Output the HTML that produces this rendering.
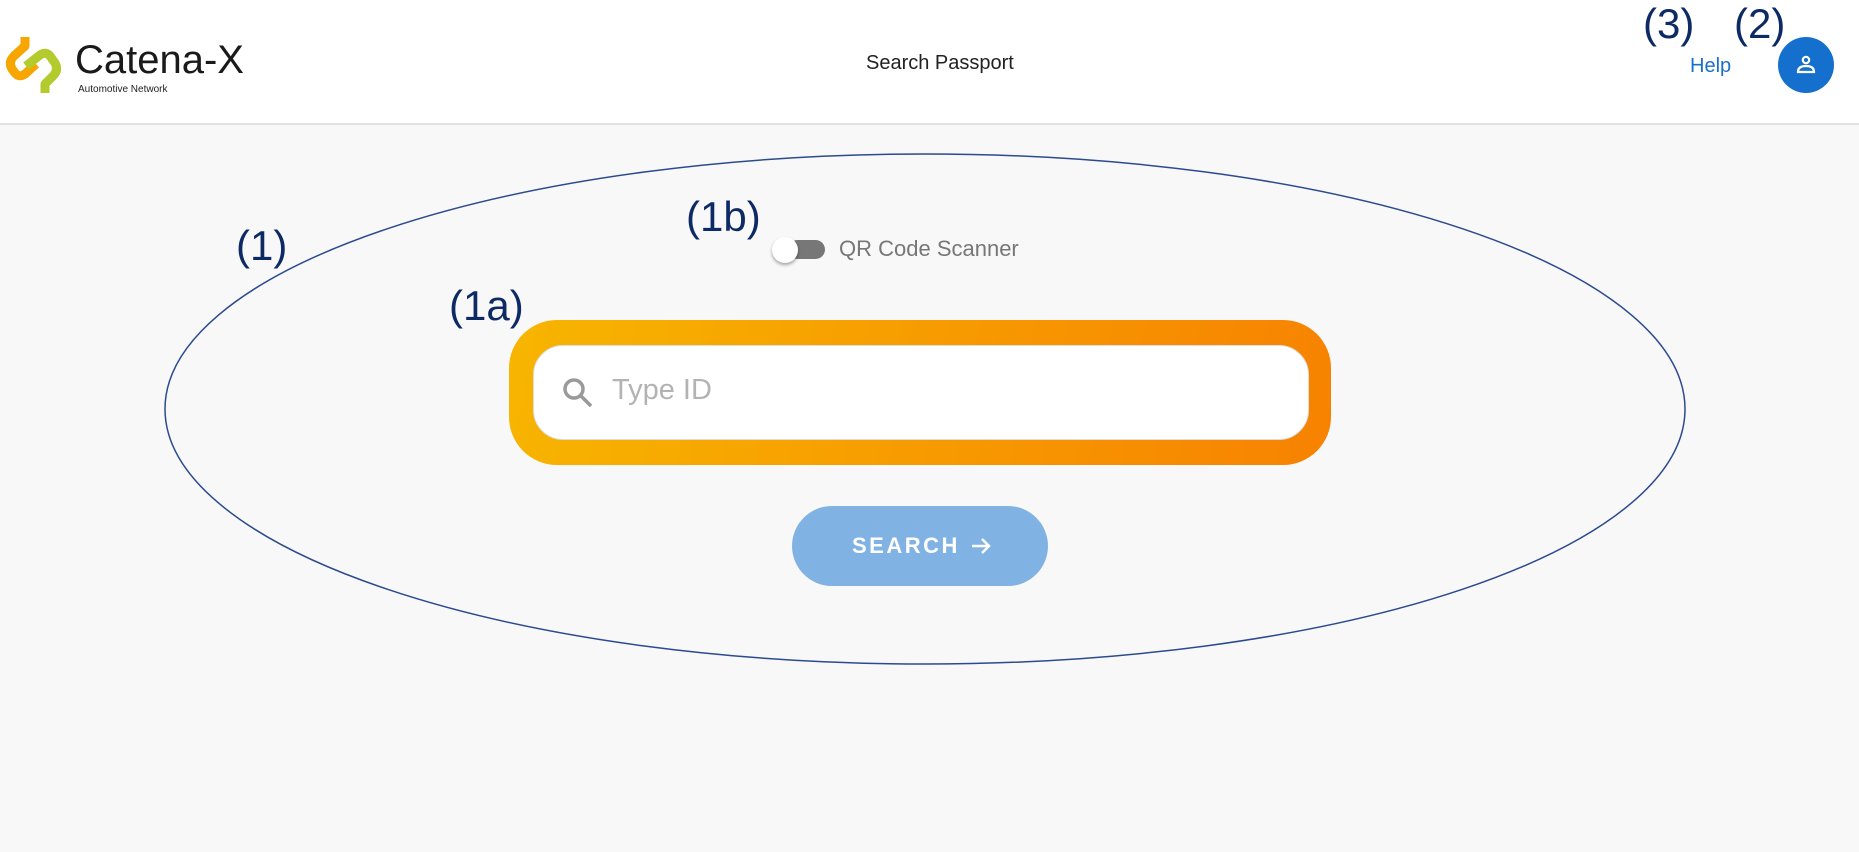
<!DOCTYPE html>
<html><head><meta charset="utf-8"><style>
*{margin:0;padding:0;box-sizing:border-box}
body{width:1859px;height:852px;background:#f8f8f8;font-family:"Liberation Sans",sans-serif;position:relative;overflow:hidden}
.hdr{position:absolute;left:0;top:0;width:1859px;height:125px;background:#fff;border-bottom:2px solid #e2e2e2}
.abs{position:absolute;white-space:nowrap}
.lbl{position:absolute;color:#0d2a64;font-size:42px;font-family:"Liberation Sans",sans-serif;line-height:1}
</style></head><body>
<div class="hdr"></div>
<svg class="abs" style="left:0;top:0" width="80" height="110" viewBox="0 0 80 110" fill="none" stroke-width="9" stroke-linejoin="round">
<path d="M25 37 L25 46 L14 56 Q8 62 12 69 L15 73 Q19 78 25 74 L36 64" stroke="#f7a600"/>
<path d="M45 93 L45 84 L53 76 Q59 70 55 63 L50 56 Q46 51 40 55 L26 66" stroke="#b3cb2d"/>
</svg>
<div class="abs" style="left:75px;top:40px;font-size:40px;color:#1a1a1a;line-height:1">Catena-X</div>
<div class="abs" style="left:78px;top:84px;font-size:10px;color:#222">Automotive Network</div>
<div class="abs" style="left:866px;top:52px;font-size:20px;color:#222">Search Passport</div>
<div class="abs" style="left:1690px;top:55px;font-size:20px;color:#1c6fc9">Help</div>
<div class="abs" style="left:1778px;top:37px;width:56px;height:56px;border-radius:50%;background:#1470cc"></div>
<svg class="abs" style="left:1795px;top:54px" width="22" height="22" viewBox="0 0 22 22" fill="none" stroke="#fff" stroke-width="2.2"><circle cx="11" cy="6" r="3.2"/><path d="M3 18 Q3 12 11 12 Q19 12 19 18 Z"/></svg>
<div class="lbl" style="left:1643px;top:3px">(3)</div>
<div class="lbl" style="left:1734px;top:3px">(2)</div>
<svg class="abs" style="left:0;top:0" width="1859" height="852"><ellipse cx="925" cy="409" rx="760" ry="255" fill="none" stroke="#2c4a8f" stroke-width="1.5"/></svg>
<div class="lbl" style="left:236px;top:225px">(1)</div>
<div class="lbl" style="left:686px;top:196px">(1b)</div>
<div class="lbl" style="left:449px;top:285px">(1a)</div>
<div class="abs" style="left:788px;top:240px;width:37px;height:19px;border-radius:10px;background:#777"></div>
<div class="abs" style="left:772px;top:237px;width:26px;height:26px;border-radius:50%;background:#fff;box-shadow:0 2px 3px rgba(0,0,0,.35)"></div>
<div class="abs" style="left:839px;top:236px;font-size:22px;color:#777">QR Code Scanner</div>
<div class="abs" style="left:509px;top:320px;width:822px;height:145px;border-radius:48px;background:linear-gradient(100deg,#f7b500,#f78200)"></div>
<div class="abs" style="left:533px;top:345px;width:776px;height:95px;border-radius:30px;background:#fff;border:1px solid #ddd"></div>
<svg class="abs" style="left:562px;top:377px" width="32" height="32" viewBox="0 0 32 32" fill="none" stroke="#9a9a9a" stroke-width="3.5"><circle cx="12" cy="12" r="9"/><path d="M19 19 L29 29"/></svg>
<div class="abs" style="left:612px;top:374px;font-size:29px;color:#b3b3b3">Type ID</div>
<div class="abs" style="left:792px;top:506px;width:256px;height:80px;border-radius:40px;background:#80b2e3"></div>
<div class="abs" style="left:852px;top:533px;font-size:22px;font-weight:bold;color:#fff;letter-spacing:2.5px">SEARCH</div>
<svg class="abs" style="left:970px;top:535px" width="22" height="22" viewBox="0 0 22 22" fill="none" stroke="#fff" stroke-width="2.5"><path d="M2 11 H19 M12 4 L19 11 L12 18"/></svg>
</body></html>
